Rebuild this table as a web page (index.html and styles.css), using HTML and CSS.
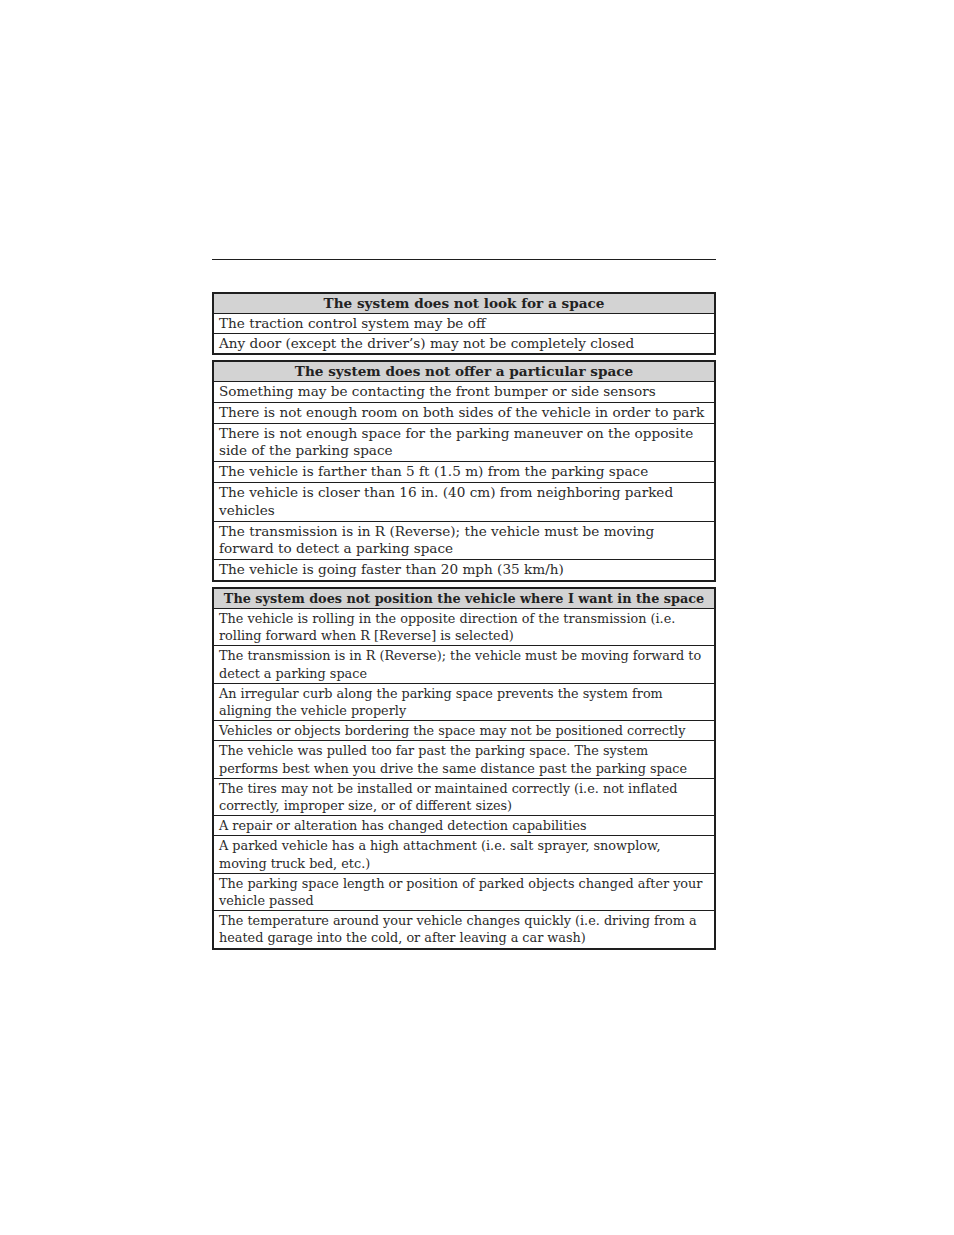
FILE: index.html
```html
<!DOCTYPE html>
<html lang="en">
<head>
<meta charset="utf-8">
<title>Active Park Assist</title>
<link rel="stylesheet" href="styles.css">
</head>
<body>
<div class="page">
  <div class="rule"></div>
  <table class="tbl">
    <tr><th>The system does not look for a space</th></tr>
    <tr><td>The traction control system may be off</td></tr>
    <tr><td>Any door (except the driver’s) may not be completely closed</td></tr>
  </table>
  <table class="tbl t2">
    <tr><th>The system does not offer a particular space</th></tr>
    <tr><td>Something may be contacting the front bumper or side sensors</td></tr>
    <tr><td>There is not enough room on both sides of the vehicle in order to park</td></tr>
    <tr><td>There is not enough space for the parking maneuver on the opposite<br>side of the parking space</td></tr>
    <tr><td>The vehicle is farther than 5 ft (1.5 m) from the parking space</td></tr>
    <tr><td>The vehicle is closer than 16 in. (40 cm) from neighboring parked<br>vehicles</td></tr>
    <tr><td>The transmission is in R (Reverse); the vehicle must be moving<br>forward to detect a parking space</td></tr>
    <tr><td>The vehicle is going faster than 20 mph (35 km/h)</td></tr>
  </table>
  <table class="tbl t3">
    <tr><th>The system does not position the vehicle where I want in the space</th></tr>
    <tr><td>The vehicle is rolling in the opposite direction of the transmission (i.e.<br>rolling forward when R [Reverse] is selected)</td></tr>
    <tr><td>The transmission is in R (Reverse); the vehicle must be moving forward to<br>detect a parking space</td></tr>
    <tr><td>An irregular curb along the parking space prevents the system from<br>aligning the vehicle properly</td></tr>
    <tr><td>Vehicles or objects bordering the space may not be positioned correctly</td></tr>
    <tr><td>The vehicle was pulled too far past the parking space. The system<br>performs best when you drive the same distance past the parking space</td></tr>
    <tr><td>The tires may not be installed or maintained correctly (i.e. not inflated<br>correctly, improper size, or of different sizes)</td></tr>
    <tr><td>A repair or alteration has changed detection capabilities</td></tr>
    <tr><td>A parked vehicle has a high attachment (i.e. salt sprayer, snowplow,<br>moving truck bed, etc.)</td></tr>
    <tr><td>The parking space length or position of parked objects changed after your<br>vehicle passed</td></tr>
    <tr><td>The temperature around your vehicle changes quickly (i.e. driving from a<br>heated garage into the cold, or after leaving a car wash)</td></tr>
  </table>
</div>
</body>
</html>
```

FILE: styles.css
```css
html, body {
  margin: 0;
  padding: 0;
  background: #ffffff;
}
.page {
  width: 504px;
  margin-left: 212px;
  padding-top: 259px;
  font-family: "DejaVu Serif", "Liberation Serif", serif;
  font-size: 13.6px;
  color: #2b2b2b;
}
.rule {
  height: 1px;
  background: #1e1e1e;
  margin-bottom: 32px;
}
.tbl {
  width: 504px;
  border-collapse: collapse;
  border: 2px solid #1e1e1e;
  margin-bottom: 5px;
}
.tbl th {
  background: #d3d3d3;
  font-weight: bold;
  text-align: center;
  padding: 1px 2px 1px 2px;
  line-height: 17px;
  border-bottom: 1px solid #1e1e1e;
  color: #222;
  white-space: nowrap;
}
.tbl td {
  text-align: left;
  padding: 1px 2px 1px 5px;
  line-height: 17px;
  border-top: 1px solid #1e1e1e;
  white-space: nowrap;
}
.t2 td {
  line-height: 17.8px;
}
.t3 {
  font-size: 12.8px;
}
.t3 td {
  line-height: 17.2px;
}
```
